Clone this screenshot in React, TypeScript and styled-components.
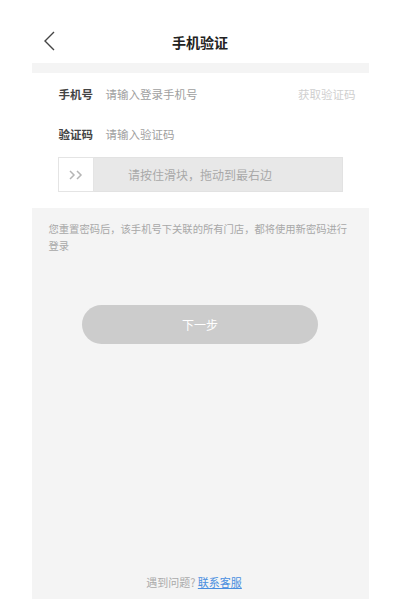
import React from "react";
import styled, { createGlobalStyle } from "styled-components";

const Global = createGlobalStyle`
  html, body { margin: 0; padding: 0; background: #ffffff; }
  body { font-family: "Noto Sans CJK SC", "Noto Sans", sans-serif; }
  * { box-sizing: border-box; }
`;

const Page = styled.div`
  width: 400px;
  height: 600px;
  display: flex;
  justify-content: center;
  background: #ffffff;
`;

const Frame = styled.div`
  width: 337px;
  height: 599px;
  display: flex;
  flex-direction: column;
`;

const Header = styled.div`
  height: 63px;
  padding-top: 20px;
  position: relative;
  display: flex;
  align-items: center;
  justify-content: center;
`;

const Back = styled.div`
  position: absolute;
  left: 12px;
  top: 31px;
  width: 11px;
  height: 20px;
  display: flex;
`;

const Title = styled.div`
  font-size: 14px;
  font-weight: 700;
  color: #222;
  line-height: 20px;
`;

const Band = styled.div`
  height: 10px;
  background: #f4f4f4;
`;

const Form = styled.div`
  background: #fff;
  padding: 1px 0 16px;
  display: flex;
  flex-direction: column;
`;

const Row = styled.div`
  height: 40px;
  display: flex;
  align-items: center;
  padding: 0 13px 0 27px;
`;

const Label = styled.span`
  font-size: 11.5px;
  font-weight: 600;
  color: #444;
  width: 47px;
  flex-shrink: 0;
`;

const Placeholder = styled.span`
  font-size: 11.5px;
  color: #a0a0a0;
  flex: 1;
`;

const CodeLink = styled.span`
  font-size: 11.5px;
  color: #cfcfcf;
`;

const Slider = styled.div`
  margin: 3px 0 0 26px;
  width: 285px;
  height: 35px;
  background: #e8e8e8;
  border: 1px solid #e2e2e2;
  position: relative;
  display: flex;
  align-items: center;
  justify-content: center;
`;

const Handle = styled.div`
  position: absolute;
  left: -1px;
  top: -1px;
  width: 36px;
  height: 35px;
  background: #fff;
  border: 1px solid #e4e4e4;
  display: flex;
  align-items: center;
  justify-content: center;
`;

const SliderText = styled.span`
  font-size: 12px;
  color: #a8a8a8;
`;

const Gray = styled.div`
  flex: 1;
  background: #f4f4f4;
  display: flex;
  flex-direction: column;
  padding-top: 12px;
`;

const Notice = styled.p`
  margin: 0;
  padding: 0 18px 0 17px;
  font-size: 10.3px;
  line-height: 17px;
  color: #a8a8a8;
`;

const NextButton = styled.div`
  margin: 51px auto 0;
  width: 236px;
  height: 39px;
  border-radius: 20px;
  background: #cccccc;
  color: #fff;
  font-size: 12px;
  display: flex;
  align-items: center;
  justify-content: center;
`;

const Footer = styled.div`
  margin-top: auto;
  padding: 0 12px 10px 0;
  text-align: center;
  font-size: 11px;
  line-height: 14px;
  color: #aaa;
`;

const Link = styled.span`
  color: #4a8fe0;
  text-decoration: underline;
`;

export default function App() {
  return (
    <>
      <Global />
      <Page>
        <Frame>
          <Header>
            <Back>
              <svg width="11" height="20" viewBox="0 0 11 20">
                <polyline points="10,1 1,10 10,19" fill="none" stroke="#444" strokeWidth="1.4" />
              </svg>
            </Back>
            <Title>手机验证</Title>
          </Header>
          <Band />
          <Form>
            <Row>
              <Label>手机号</Label>
              <Placeholder>请输入登录手机号</Placeholder>
              <CodeLink>获取验证码</CodeLink>
            </Row>
            <Row>
              <Label>验证码</Label>
              <Placeholder>请输入验证码</Placeholder>
            </Row>
            <Slider>
              <Handle>
                <svg width="14" height="10" viewBox="0 0 14 10">
                  <polyline points="1,1 5,5 1,9" fill="none" stroke="#b5b5b5" strokeWidth="1.5" />
                  <polyline points="8,1 12,5 8,9" fill="none" stroke="#b5b5b5" strokeWidth="1.5" />
                </svg>
              </Handle>
              <SliderText>请按住滑块，拖动到最右边</SliderText>
            </Slider>
          </Form>
          <Gray>
            <Notice>您重置密码后，该手机号下关联的所有门店，都将使用新密码进行登录</Notice>
            <NextButton>下一步</NextButton>
            <Footer>
              遇到问题? <Link>联系客服</Link>
            </Footer>
          </Gray>
        </Frame>
      </Page>
    </>
  );
}
